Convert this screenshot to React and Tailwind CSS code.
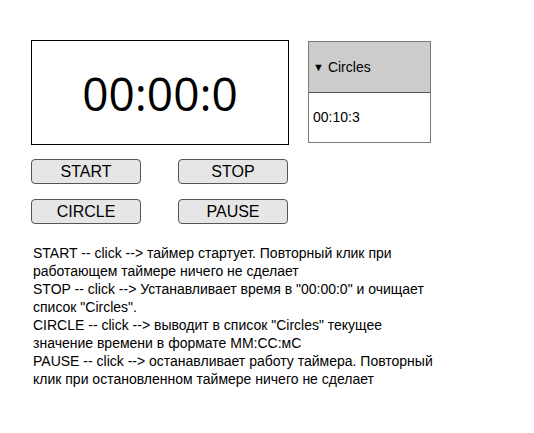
import React, { useState } from 'react';

const buttons = ['START', 'STOP', 'CIRCLE', 'PAUSE'];

function App() {
  const [time] = useState('00:00:0');
  const [circles] = useState(['00:10:3']);

  return (
    <div className="min-h-screen bg-white pl-[31px] pt-[40px] font-['Liberation_Sans',Arial,sans-serif] text-black">
      <div className="flex items-start gap-[19px]">
        <div className="flex flex-col">
          <div className="flex h-[105px] w-[258px] items-center justify-center border border-black">
            <span className="font-['Open_Sans',sans-serif] text-[46px] leading-none">{time}</span>
          </div>
          <div className="mt-[14px] grid grid-cols-[110px_110px] gap-x-[37px] gap-y-[15px]">
            {buttons.map((b) => (
              <button
                key={b}
                className="h-[25px] rounded-[4px] border border-[#555] bg-[#e6e6e6] text-[16px] leading-none"
              >
                {b}
              </button>
            ))}
          </div>
        </div>
        <div className="mt-px flex h-[102px] w-[123px] flex-col border border-[#7a7a7a]">
          <div className="flex h-[51px] items-center border-b border-[#555] bg-[#cccccc] pl-[4px] text-[14px]">
            <span className="mr-[4px] text-[11px]">▼</span>Circles
          </div>
          <div className="flex flex-1 flex-col justify-center pl-[4px] text-[14px]">
            {circles.map((c) => (
              <div key={c}>{c}</div>
            ))}
          </div>
        </div>
      </div>
      <div className="mt-[20px] w-[405px] pl-[2px] text-[14px] leading-[18px]">
        <div>START -- click --&gt; таймер стартует. Повторный клик при работающем таймере ничего не сделает</div>
        <div>STOP -- click --&gt; Устанавливает время в "00:00:0" и очищает список "Circles".</div>
        <div>CIRCLE -- click --&gt; выводит в список "Circles" текущее значение времени в формате MM:CC:мС</div>
        <div>PAUSE -- click --&gt; останавливает работу таймера. Повторный клик при остановленном таймере ничего не сделает</div>
      </div>
    </div>
  );
}

export default App;
